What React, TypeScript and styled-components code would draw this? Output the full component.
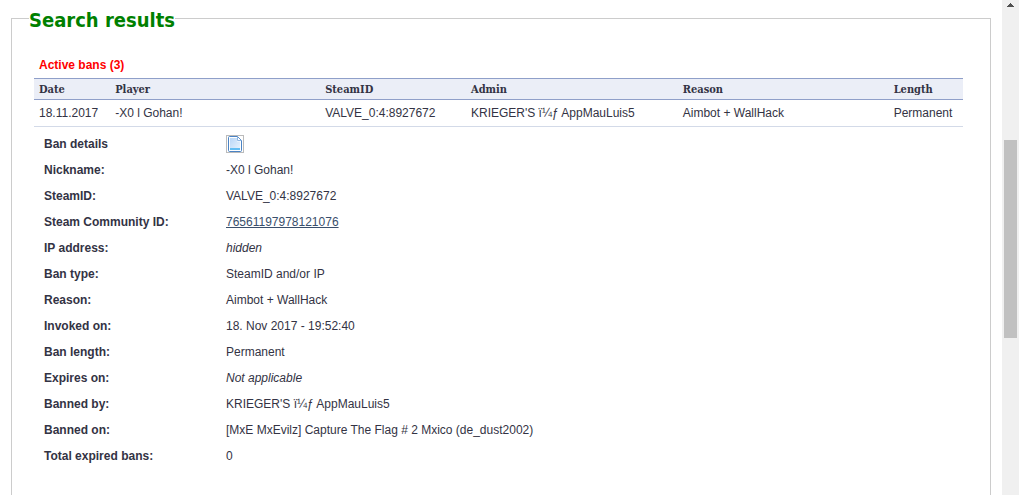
import React from "react";
import styled, { createGlobalStyle } from "styled-components";

const GlobalStyle = createGlobalStyle`
  * { box-sizing: border-box; }
  body {
    margin: 0;
    background: #ffffff;
    color: #333344;
    font-family: "Liberation Sans", Arial, sans-serif;
    font-size: 12px;
    line-height: 16px;
  }
`;

const Window = styled.div`
  display: flex;
  height: 100vh;
  overflow: hidden;
`;

const Content = styled.main`
  flex: 1;
  min-width: 0;
  padding: 4px 11px 0;
`;

const ResultsBox = styled.fieldset`
  min-width: 0;
  min-height: 100vh;
  margin: 0;
  padding: 20px 27px 24px 22px;
  border: 1px solid #cccccc;
`;

const Title = styled.legend`
  margin-left: -5px;
  padding: 4px 0 0;
  color: #008000;
  font-family: "DejaVu Sans Condensed", "DejaVu Sans", Tahoma, sans-serif;
  font-size: 20px;
  font-weight: bold;
  line-height: 24px;
`;

const SectionHeading = styled.h2`
  margin: 0;
  padding: 0 5px;
  color: #ff0000;
  font-size: 12px;
  line-height: 26px;
`;

const BanTable = styled.table`
  width: 100%;
  table-layout: fixed;
  border-collapse: collapse;
`;

const Column = styled.col<{ $share: number }>`
  width: ${({ $share }) => $share}%;
`;

const HeadCell = styled.th`
  height: 21px;
  padding: 2px 5px 0;
  background: #ebeef7;
  border-top: 1px solid #8f9fc9;
  border-bottom: 1px solid #8f9fc9;
  font-family: "DejaVu Serif Condensed", "DejaVu Serif", Georgia, serif;
  font-size: 11px;
  text-align: left;
`;

const Cell = styled.td`
  height: 27px;
  padding: 0 5px;
  border-bottom: 1px solid #d3dae8;
  white-space: nowrap;
`;

const DetailTable = styled.table`
  width: 100%;
  margin-top: 4px;
  border-collapse: collapse;
`;

const DetailLabel = styled.th`
  width: 192px;
  height: 26px;
  padding: 0 10px;
  text-align: left;
`;

const DetailValue = styled.td<{ $italic?: boolean }>`
  height: 26px;
  padding: 0;
  font-style: ${({ $italic }) => ($italic ? "italic" : "normal")};
`;

const ProfileLink = styled.a`
  color: #3a4f6c;
  text-decoration: underline;
`;

const IconButton = styled.button`
  display: block;
  width: 18px;
  height: 18px;
  padding: 0;
  border: 1px solid #bbbbbb;
  background: #ffffff;
  cursor: pointer;

  svg { display: block; }
`;

const Scrollbar = styled.div`
  display: flex;
  flex-direction: column;
  align-items: center;
  width: 17px;
  background: #f0f0f0;
`;

const ScrollArrow = styled.svg`
  width: 17px;
  height: 17px;
  flex: none;
`;

const ScrollSpace = styled.div<{ $part: number }>`
  flex: ${({ $part }) => $part} 0 0;
`;

const ScrollThumb = styled.div`
  flex: 198 0 0;
  width: 13px;
  background: #c1c1c1;
`;

const columns = [
  { name: "Date", share: 8.2 },
  { name: "Player", share: 22.6 },
  { name: "SteamID", share: 15.7 },
  { name: "Admin", share: 22.8 },
  { name: "Reason", share: 22.7 },
  { name: "Length", share: 8 },
];

const ban = [
  "18.11.2017",
  "-X0 l Gohan!",
  "VALVE_0:4:8927672",
  "KRIEGER'S ï¼ƒ AppMauLuis5",
  "Aimbot + WallHack",
  "Permanent",
];

const details: { label: string; value: string; italic?: boolean; link?: boolean }[] = [
  { label: "Nickname:", value: "-X0 l Gohan!" },
  { label: "SteamID:", value: "VALVE_0:4:8927672" },
  { label: "Steam Community ID:", value: "76561197978121076", link: true },
  { label: "IP address:", value: "hidden", italic: true },
  { label: "Ban type:", value: "SteamID and/or IP" },
  { label: "Reason:", value: "Aimbot + WallHack" },
  { label: "Invoked on:", value: "18. Nov 2017 - 19:52:40" },
  { label: "Ban length:", value: "Permanent" },
  { label: "Expires on:", value: "Not applicable", italic: true },
  { label: "Banned by:", value: "KRIEGER'S ï¼ƒ AppMauLuis5" },
  { label: "Banned on:", value: "[MxE MxEvilz] Capture The Flag # 2 Mxico (de_dust2002)" },
  { label: "Total expired bans:", value: "0" },
];

function PageIcon() {
  return (
    <svg width="16" height="16" viewBox="0 0 16 16" aria-hidden="true">
      <defs>
        <linearGradient id="paper" x1="0" y1="0" x2="1" y2="1">
          <stop offset="0" stopColor="#b9d6f7" />
          <stop offset="1" stopColor="#e8f3fe" />
        </linearGradient>
      </defs>
      <path
        d="M2.500 .5h8l4 4v10q0 1-1 1h-11q-1 0-1-1v-13q0-1 1-1z"
        fill="#ffffff"
        stroke="#4a83c4"
      />
      <path d="M3 2h7v3.500h3V14H3z" fill="url(#paper)" />
      <path d="M10.500 1v3.500h3.500" fill="#ffffff" stroke="#8fb6e2" />
      <path d="M3 12h10v2H3z" fill="#62bdf3" />
    </svg>
  );
}

export default function App() {
  return (
    <Window>
      <GlobalStyle />
      <Content>
        <ResultsBox>
          <Title>Search results</Title>
          <SectionHeading>Active bans (3)</SectionHeading>
          <BanTable>
            <colgroup>
              {columns.map((c) => (
                <Column key={c.name} $share={c.share} />
              ))}
            </colgroup>
            <thead>
              <tr>
                {columns.map((c) => (
                  <HeadCell key={c.name} scope="col">{c.name}</HeadCell>
                ))}
              </tr>
            </thead>
            <tbody>
              <tr>
                {ban.map((text) => (
                  <Cell key={text}>{text}</Cell>
                ))}
              </tr>
            </tbody>
          </BanTable>
          <DetailTable>
            <tbody>
              <tr>
                <DetailLabel scope="row">Ban details</DetailLabel>
                <DetailValue>
                  <IconButton type="button" aria-label="Ban details">
                    <PageIcon />
                  </IconButton>
                </DetailValue>
              </tr>
              {details.map((d) => (
                <tr key={d.label}>
                  <DetailLabel scope="row">{d.label}</DetailLabel>
                  <DetailValue $italic={d.italic}>
                    {d.link ? <ProfileLink href="#profile">{d.value}</ProfileLink> : d.value}
                  </DetailValue>
                </tr>
              ))}
            </tbody>
          </DetailTable>
        </ResultsBox>
      </Content>
      <Scrollbar aria-hidden="true">
        <ScrollArrow viewBox="0 0 17 17">
          <path d="M8 3h1v1h1v1h1v1h1v1H5V6h1V5h1V4h1z" fill="#505050" />
        </ScrollArrow>
        <ScrollSpace $part={123} />
        <ScrollThumb />
        <ScrollSpace $part={157} />
      </Scrollbar>
    </Window>
  );
}
